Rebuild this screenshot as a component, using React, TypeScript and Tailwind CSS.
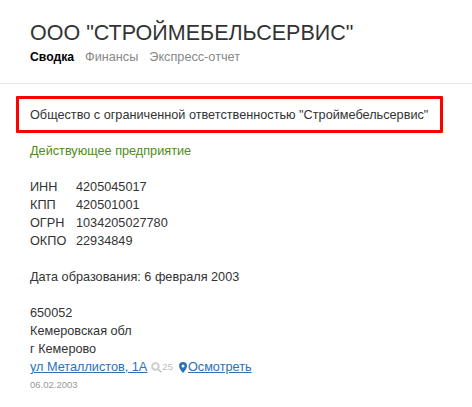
export default function App() {
  return (
    <div className="w-[472px] h-[407px] overflow-hidden bg-white text-[12.7px] leading-[18px] text-[#333] font-['Liberation_Sans',Arial,sans-serif]">
      <div className="h-[84px] border-b border-[#e7e7e7] pl-[30px] pt-[20px]">
        <h1 className="text-[21.5px] leading-[26px] font-normal text-[#333]">ООО "СТРОЙМЕБЕЛЬСЕРВИС"</h1>
        <div className="mt-[2px] flex gap-[11px] leading-[18px]">
          <span className="text-[12.2px] font-bold text-black">Сводка</span>
          <span className="text-[#888]">Финансы</span>
          <span className="text-[#888]">Экспресс-отчет</span>
        </div>
      </div>

      <div className="ml-[16px] mt-[12px] flex h-[37px] w-[427px] items-center rounded-[1px] border-[3px] border-[#fe0000] pl-[11px]">
        Общество с ограниченной ответственностью "Строймебельсервис"
      </div>

      <div className="mt-[9px] pl-[30px]">
        <p className="text-[#4e8c18]">Действующее предприятие</p>

        <div className="mt-[18px]">
          {[
            ["ИНН", "4205045017"],
            ["КПП", "420501001"],
            ["ОГРН", "1034205027780"],
            ["ОКПО", "22934849"],
          ].map(([label, value]) => (
            <div key={label} className="flex">
              <span className="w-[46px]">{label}</span>
              <span>{value}</span>
            </div>
          ))}
        </div>

        <p className="mt-[18px]">Дата образования: 6 февраля 2003</p>

        <div className="mt-[18px]">
          <p>650052</p>
          <p>Кемеровская обл</p>
          <p>г Кемерово</p>
          <div className="flex items-center">
            <a className="text-[#2a72b5] underline">ул Металлистов, 1А</a>
            <svg className="ml-[4px]" width="11" height="11" viewBox="0 0 10 10" fill="none" stroke="#ccc" strokeWidth="1.7">
              <circle cx="4" cy="4" r="3" />
              <path d="M6.2 6.2 9.4 9.4" />
            </svg>
            <span className="text-[9.500px] text-[#bbb]">25</span>
            <svg className="ml-[6px]" width="8" height="11" viewBox="0 0 8 11">
              <path fill="#2a72b5" fillRule="evenodd" d="M4 0a4 4 0 0 1 4 4c0 2.500-2.500 5-4 7C2.500 9 0 6.500 0 4a4 4 0 0 1 4-4Zm0 2.500a1.500 1.500 0 1 0 0 3 1.500 1.500 0 0 0 0-3Z" />
            </svg>
            <a className="ml-[1px] text-[#2a72b5] underline">Осмотреть</a>
          </div>
          <p className="text-[9.500px] leading-[18px] text-[#999]">06.02.2003</p>
        </div>
      </div>
    </div>
  );
}
